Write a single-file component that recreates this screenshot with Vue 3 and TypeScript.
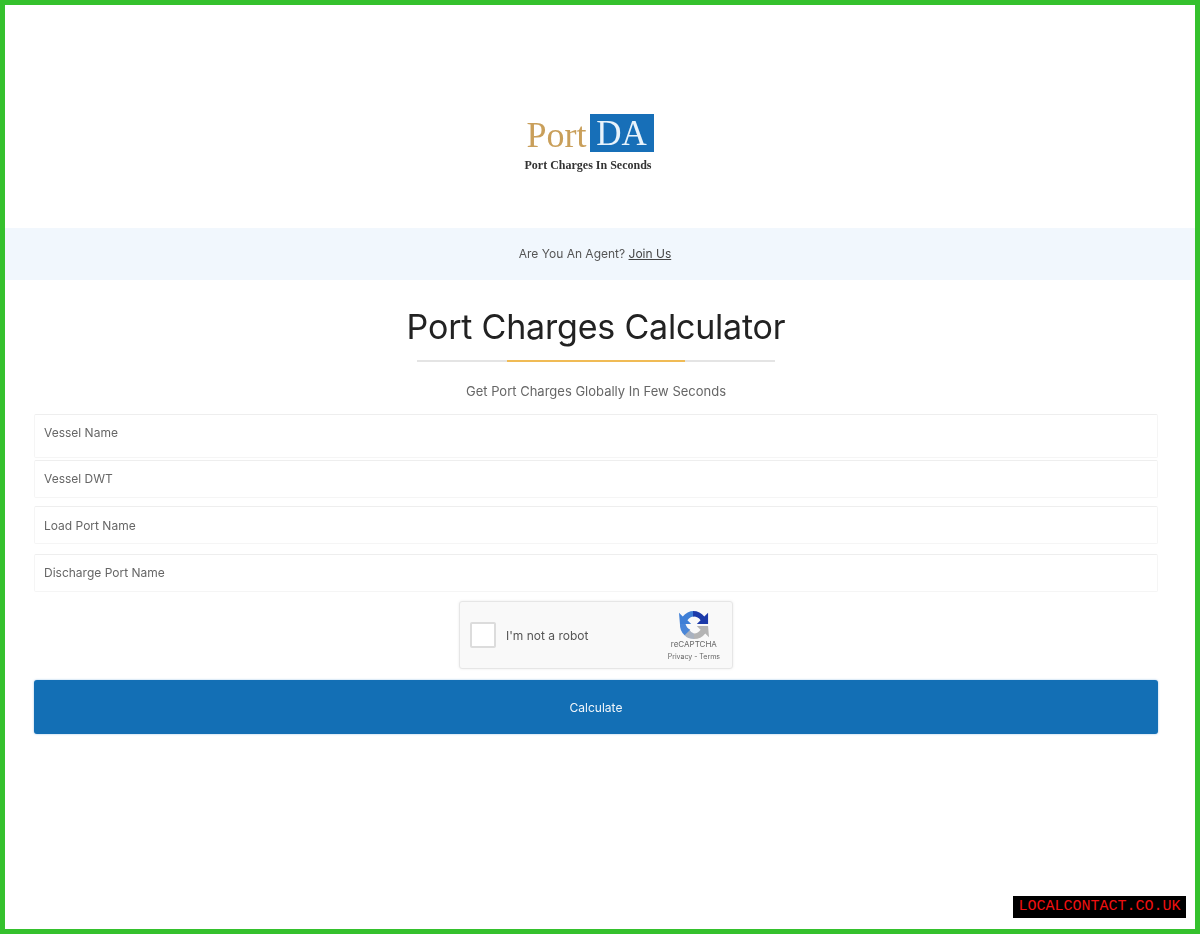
<template>
  <div class="frame">
    <div class="page">
      <header class="logo-wrap">
        <div class="logo">
          <div class="logo-mark">
            <span class="logo-port">Port</span>
            <span class="logo-da">DA</span>
          </div>
          <div class="logo-tag">Port Charges In Seconds</div>
        </div>
      </header>

      <div class="agent-bar">
        <span>Are You An Agent? <a href="#" class="join">Join Us</a></span>
      </div>

      <main class="content">
        <h1>Port Charges Calculator</h1>
        <div class="divider"><span></span></div>
        <p class="sub">Get Port Charges Globally In Few Seconds</p>

        <form class="calc-form" @submit.prevent>
          <input
            v-for="field in fields"
            :key="field.name"
            type="text"
            :class="field.name"
            :placeholder="field.label"
          />

          <div class="captcha">
            <span class="captcha-box"></span>
            <span class="captcha-text">I'm not a robot</span>
            <div class="captcha-brand">
              <svg width="30" height="30" viewBox="0 0 32 32">
                <path d="M16 31A15 15 0 0 0 28 25L32 29L31 17L19 17L23 21A9 9 0 0 1 16 25Z" fill="#b4b4b4" />
                <path d="M16 31A15 15 0 0 1 5 26L11 21A9 9 0 0 0 16 25Z" fill="#a9b2c0" />
                <path d="M1 15A15 15 0 0 0 6 27L12 21A9 9 0 0 1 7 15Z" fill="#4a86d8" />
                <path d="M16 1A15 15 0 0 0 4 7L0 3L1 15L13 15L9 11A9 9 0 0 1 16 7Z" fill="#3f7fd6" />
                <path d="M15 1A15 15 0 0 1 27 7L31 3L31 15L19 15L23 11A9 9 0 0 0 15 7Z" fill="#1c3aa9" />
              </svg>
              <span class="brand-name">reCAPTCHA</span>
              <span class="brand-links">Privacy - Terms</span>
            </div>
          </div>

          <button type="submit" class="calc-btn"><span>Calculate</span></button>
        </form>
      </main>

      <div class="site-badge">LOCALCONTACT.CO.UK</div>
    </div>
  </div>
</template>

<script setup lang="ts">
interface Field {
  name: string
  label: string
}

const fields: Field[] = [
  { name: 'vessel-name', label: 'Vessel Name' },
  { name: 'vessel-dwt', label: 'Vessel DWT' },
  { name: 'load-port', label: 'Load Port Name' },
  { name: 'discharge-port', label: 'Discharge Port Name' }
]
</script>

<style>
body {
  margin: 0;
  background: #fff;
}
</style>

<style scoped>
.frame {
  position: relative;
  box-sizing: border-box;
  height: 934px;
  border: 5px solid #35c12d;
  background: #fff;
  font-family: Inter, "Open Sans", sans-serif;
  overflow: hidden;
}

.page {
  height: 100%;
}

.logo-wrap {
  display: flex;
  justify-content: center;
  padding: 109px 23px 0 0;
  height: 114px;
}

.logo {
  width: 130px;
  filter: blur(0.7px);
}

.logo-mark {
  display: flex;
  align-items: center;
  height: 38px;
}

.logo-port {
  flex: 1;
  padding: 3px 0 0 3px;
  font-family: "Liberation Serif", serif;
  font-size: 36px;
  color: #c99f5a;
}

.logo-da {
  width: 64px;
  height: 38px;
  background: #176fb8;
  color: #e8f3fb;
  font-family: "Liberation Serif", serif;
  font-size: 35px;
  line-height: 40px;
  text-align: center;
}

.logo-tag {
  margin-top: 6px;
  padding-left: 1px;
  font-family: "Liberation Serif", serif;
  font-size: 12px;
  font-weight: 700;
  color: #333;
  white-space: nowrap;
}

.agent-bar {
  display: flex;
  justify-content: center;
  align-items: center;
  height: 52px;
  padding-right: 10px;
  background: #f1f7fd;
  font-size: 12px;
  color: #555;
}

.agent-bar span {
  filter: blur(0.6px);
  margin-top: -2px;
}

.join {
  color: #444;
}

.content {
  padding: 0 37px 0 29px;
  text-align: center;
}

h1 {
  margin: 25px 0 0;
  font-size: 34px;
  line-height: 44px;
  font-weight: 400;
  letter-spacing: -0.2px;
  color: #222;
  filter: blur(0.5px);
}

.divider {
  display: flex;
  justify-content: center;
  width: 358px;
  height: 2px;
  margin: 11px auto 0;
  background: #e4e4e4;
  filter: blur(0.4px);
}

.divider span {
  width: 178px;
  background: #f0bb55;
}

.sub {
  margin: 20px 0 14px;
  font-size: 13px;
  line-height: 18px;
  color: #666;
  filter: blur(0.6px);
}

.calc-form {
  display: flex;
  flex-direction: column;
}

input {
  box-sizing: border-box;
  width: 100%;
  height: 38px;
  margin-bottom: 10px;
  padding: 0 9px;
  border: 1px solid #f5f5f5;
  border-top-color: #eee;
  border-radius: 2px;
  background: #fff;
  font-family: inherit;
  font-size: 12px;
  outline: none;
  filter: blur(0.5px);
}

input::placeholder {
  color: #666;
}

input.vessel-name {
  height: 44px;
  margin-bottom: 2px;
  padding-bottom: 8px;
}

input.vessel-dwt {
  margin-bottom: 8px;
  padding-bottom: 2px;
}

input.discharge-port {
  margin-bottom: 9px;
  padding-bottom: 2px;
}

.captcha {
  box-sizing: border-box;
  display: flex;
  align-items: center;
  align-self: center;
  width: 274px;
  height: 68px;
  margin: 0 0 11px 0;
  padding: 0 12px 0 10px;
  border: 1px solid #e6e6e6;
  border-radius: 3px;
  background: #f9f9f9;
  box-shadow: 0 0 3px rgba(0, 0, 0, 0.08);
  filter: blur(0.4px);
}

.captcha-box {
  box-sizing: border-box;
  width: 26px;
  height: 26px;
  border: 2px solid #dcdcdc;
  border-radius: 2px;
  background: #fff;
}

.captcha-text {
  margin-left: 10px;
  font-size: 12px;
  color: #555;
  filter: blur(0.3px);
}

.captcha-brand {
  display: flex;
  flex-direction: column;
  align-items: center;
  margin-left: auto;
  margin-top: 1px;
}

.brand-name {
  font-size: 8px;
  line-height: 9px;
  color: #666;
}

.brand-links {
  margin-top: 3px;
  font-size: 7px;
  line-height: 10px;
  color: #666;
}

.calc-btn {
  height: 54px;
  border: none;
  border-radius: 3px;
  background: #136fb5;
  box-shadow: 0 0 2px rgba(60, 140, 210, 0.6);
  color: #f0f6fb;
  font-family: inherit;
  font-size: 12px;
}

.calc-btn span {
  display: inline-block;
  margin-top: -1px;
  filter: blur(0.5px);
}

.site-badge {
  position: absolute;
  right: 9px;
  bottom: 11px;
  width: 173px;
  height: 22px;
  background: #000;
  color: #f01010;
  font-family: "Liberation Mono", monospace;
  font-size: 15px;
  line-height: 22px;
  text-align: center;
  white-space: nowrap;
}
</style>
